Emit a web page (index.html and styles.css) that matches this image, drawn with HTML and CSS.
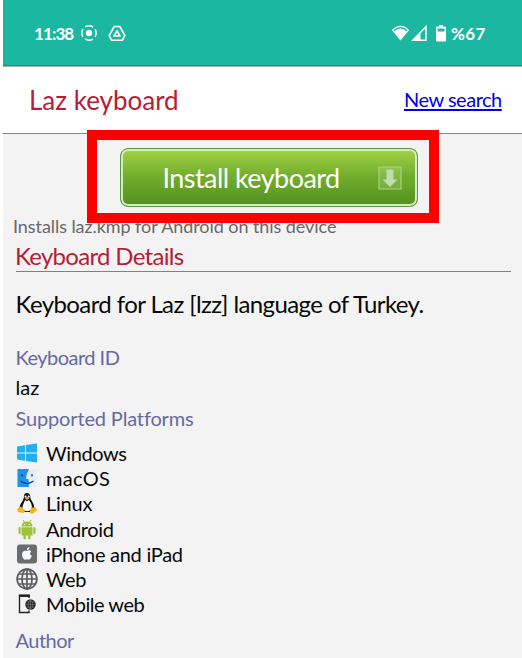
FILE: index.html
```
<!DOCTYPE html>
<html lang="en">
<head>
<meta charset="utf-8">
<title>Laz keyboard</title>
<link rel="stylesheet" href="styles.css">
</head>
<body>
<div class="phone">
  <div class="status">
    <span class="clock">11:38</span>
    <svg class="rec" width="18" height="18" viewBox="0 0 18 18"><circle cx="9" cy="9" r="3.2" fill="#fff"/><circle cx="9" cy="9" r="7.2" fill="none" stroke="#fff" stroke-width="1.5" stroke-dasharray="8.3 3.01" stroke-dashoffset="4.15"/></svg>
    <svg class="drive" width="18" height="17" viewBox="0 0 18 17"><path d="M6.2 1.5h5.6l5 9-2.5 4.8H3.7L1.200 10.500z" fill="none" stroke="#fff" stroke-width="1.6" stroke-linejoin="round"/><path d="M9 6l3 5H6z" fill="none" stroke="#fff" stroke-width="1.700" stroke-linejoin="round"/></svg>
    <span class="space"></span>
    <svg width="19" height="18" viewBox="0 0 19 18"><path d="M.8 6Q9.500-2.500 18.200 6L9.500 16.500z" fill="#fff"/><path d="M2.800 6.700Q9.500.8 16.200 6.700" fill="none" stroke="#1bb7a1" stroke-width="1.300"/></svg>
    <svg class="signal" width="16" height="17" viewBox="0 0 16 17"><path d="M15 1.800V15.300H1.800z" fill="none" stroke="#fff" stroke-width="1.500"/><path d="M1 16L9.500 7.500V16z" fill="#fff"/></svg>
    <svg class="battery" width="10" height="17" viewBox="0 0 10 17"><path d="M3 0h4v1.500h2q1 0 1 1v13q0 1-1 1H1q-1 0-1-1v-13q0-1 1-1h2z" fill="#fff"/><path d="M1.500 3.500h7v3h-7z" fill="#1bb7a1"/></svg>
    <span class="percent">%67</span>
  </div>
  <header class="header">
    <h1 class="title">Laz keyboard</h1>
    <a class="search" href="#">New search</a>
  </header>
  <main class="content">
    <a class="install" href="#">
      <span class="install-text">Install keyboard</span>
      <svg class="download" width="24" height="24" viewBox="0 0 24 24"><path d="M1 1h22v22H1z" fill="#ffffff20" stroke="#acd184" stroke-width="1.200"/><path d="M8.500 3.500h7v10h4L12 21l-7.500-7.500h4z" fill="#c0ddaa"/></svg>
    </a>
    <p class="note">Installs laz.kmp for Android on this device</p>
    <h2 class="details">Keyboard Details</h2>
    <p class="description">Keyboard for Laz [lzz] language of Turkey.</p>
    <h3 class="label id">Keyboard ID</h3>
    <p class="value">laz</p>
    <h3 class="label supported">Supported Platforms</h3>
    <ul class="platforms">
      <li><svg viewBox="0 0 22 22"><g fill="#20b1ed"><path d="M1 4.500l8-1.200v7.200H1zM10 3.100l11-1.600v9H10zM1 11.500h8v7.300l-8-1.200zM10 11.500h11v9l-11-1.600z"/></g></svg><span class="windows">Windows</span></li>
      <li><svg viewBox="0 0 22 22"><path d="M1.500 2h19v18h-19z" fill="#e3edf5"/><path d="M1.500 2H13Q10 7 10 12h2.500l.5 8H1.500z" fill="#1c91ef"/><path d="M6 7v2.500M16 7v2.500M4.500 14Q11 19 17.500 14" fill="none" stroke="#173e68" stroke-width="1.300"/></svg><span class="macos">macOS</span></li>
      <li><svg viewBox="0 0 22 22"><path d="M8 4Q8 1 11 1t3.200 3.500c0 4 4.300 6 4 12L15 20H7l-3.500-4C4 11 8 9 8 4z" fill="#111"/><path d="M9 8q2 2 4 0c2 3 3.500 5 2.500 9-2 3-7 3-9 0C6 14 8 11 9 8z" fill="#fff"/><path d="M1.500 16.500l3.500-2 4 4.500-1 2-6.500-1zM14 18.500l1-3h5l1 3-4 3h-3z" fill="#efb51c"/><path d="M8.600 6l2.400-1 2.600 1-2.600 2z" fill="#efb51c"/><circle cx="9.500" cy="4.400" r="1" fill="#fff"/><circle cx="12.700" cy="4.400" r="1" fill="#fff"/></svg><span class="linux">Linux</span></li>
      <li><svg viewBox="0 0 22 22"><g fill="#9dc33b"><path d="M5.500 8.500Q6 3.500 11 3.500t5.500 5zM5.500 9.300h11v8.200h-2v3.200q-1.200 1-2.400 0v-3.200H9.900v3.200q-1.200 1-2.400 0v-3.200h-2z"/><rect x="2.500" y="9" width="2.200" height="7" rx="1"/><rect x="17.300" y="9" width="2.200" height="7" rx="1"/></g><path d="M7 2l1.500 2.300M15 2l-1.500 2.300" stroke="#9dc33b"/><circle cx="8.700" cy="6.400" r=".6" fill="#fff"/><circle cx="13.300" cy="6.400" r=".6" fill="#fff"/></svg><span class="android">Android</span></li>
      <li><svg viewBox="0 0 22 22"><rect x="1" y="1.500" width="20" height="19" rx="3" fill="#6b6c70"/><path d="M11 8c2-1.300 3.600-.7 4.300.5-1.900 1.300-1.500 3.500.5 4.300-.8 2.500-2.200 4.700-4 3.700-.6-.3-1.200-.3-1.800 0C8 17.500 6 14 6 11.500 6 8.500 8.500 7 11 8zM10.900 7.300c0-1.700 1-3 2.500-3.300.2 1.700-1 3.200-2.500 3.300z" fill="#fff"/></svg><span class="iphone">iPhone and iPad</span></li>
      <li><svg viewBox="0 0 22 22"><g fill="none" stroke="#5c5c60" stroke-width="1.700"><circle cx="11" cy="11" r="9.900"/><ellipse cx="11" cy="11" rx="5" ry="9.800"/><path d="M11 1v20M1 11h20M2.800 6h16.400M2.800 16h16.400"/></g></svg><span class="web">Web</span></li>
      <li><svg viewBox="0 0 22 22"><path d="M13 5V2.500H3.500v17H13V17.500" fill="none" stroke="#252528" stroke-width="1.400"/><path d="M3 1.500h11v2.500H3z" fill="#252528"/><circle cx="14.500" cy="11.500" r="5.200" fill="#252528"/><path d="M9.500 11.500h10M14.500 6.500v10M10.500 8.900h8M10.500 14.100h8M14.500 6.500q-5 5 0 10M14.500 6.500q5 5 0 10" fill="none" stroke="#888" stroke-width=".5"/></svg><span class="mobile">Mobile web</span></li>
    </ul>
    <h3 class="label author">Author</h3>
  </main>
  <div class="highlight"></div>
</div>
</body>
</html>
```
FILE: styles.css
```
* { box-sizing: border-box; }
body { margin: 0; background: #fff; overflow: hidden; font-family: Lato, "Liberation Sans", sans-serif; }
h1, h2, h3, p, ul { margin: 0; padding: 0; font-weight: 400; }
span, a, h1, h2, h3, p { white-space: nowrap; }
svg { display: block; flex: none; }
.phone { position: relative; height: 658px; margin-left: 3px; overflow: hidden; }
.status { display: flex; align-items: center; height: 67px; padding: 0 35px 0 31px; background: #1bb7a1; border-bottom: 1px solid #a9b0ae; box-shadow: inset 0 -1px #17977f; color: #fff; }
.clock { width: 46px; font-size: 17px; font-weight: 700; letter-spacing: -.9px; }
.drive { margin-left: 10px; }
.space { flex: 1; }
.signal { margin-left: 1px; }
.battery { margin: 0 5px 0 9px; }
.percent { width: 36px; font-size: 17px; font-weight: 700; letter-spacing: .3px; }
.header { display: flex; align-items: center; justify-content: space-between; height: 67px; padding: 0 20px 0 26px; border-bottom: 1px solid #858585; background: #fff; }
.title { color: #b91c34; font-size: 26px; line-height: 66px; }
.search { width: 98px; padding-bottom: 3px; color: #0000ee; font-size: 20px; letter-spacing: -.48px; text-decoration-thickness: 1.5px; text-underline-offset: 2px; }
.content { display: flex; flex-direction: column; height: 524px; padding: 14px 11px 0 13px; background: #f3f3f3; color: #080808; }
.install { display: flex; align-items: center; width: 298px; height: 59px; margin-left: 103.5px; padding: 0 15px 0 42px; justify-content: space-between; border: 1px solid #5b9b35; border-radius: 8px; background: linear-gradient(#a4d247, #74b02e 45%, #528f1e); box-shadow: inset 0 0 0 2px #d5e9c6; color: #fff; text-decoration: none; }
.install-text { font-size: 27px; letter-spacing: -.55px; }
.note { height: 34px; margin-left: -3px; color: #686868; font-size: 18px; line-height: 38px; letter-spacing: -.07px; }
.details { height: 31px; border-bottom: 1px solid #d15c6d; color: #b91c34; font-size: 24px; line-height: 30px; letter-spacing: -.7px; text-indent: -1px; }
.description { height: 65px; font-size: 24px; line-height: 64px; letter-spacing: -.59px; text-indent: -.5px; }
.label { height: 30px; color: #6669a2; font-size: 20px; line-height: 40px; text-indent: -.5px; }
.id { letter-spacing: -.52px; }
.supported { letter-spacing: -.15px; }
.value { height: 31px; font-size: 20px; line-height: 40px; text-indent: -.5px; }
.platforms { list-style: none; margin-top: 12px; }
.platforms li { display: flex; align-items: center; gap: 8px; height: 25.3px; font-size: 20px; }
.platforms svg { width: 22px; height: 22px; }
.windows { letter-spacing: -.4px; }
.macos { letter-spacing: .3px; }
.linux { letter-spacing: -.25px; }
.android { letter-spacing: -.35px; }
.iphone { letter-spacing: -.27px; }
.web { letter-spacing: -.5px; }
.mobile { letter-spacing: -.46px; }
.author { margin-top: 3px; letter-spacing: -.5px; }
.highlight { position: absolute; left: 84px; top: 130px; width: 352px; height: 93px; border: 10px solid #f00; }
```
